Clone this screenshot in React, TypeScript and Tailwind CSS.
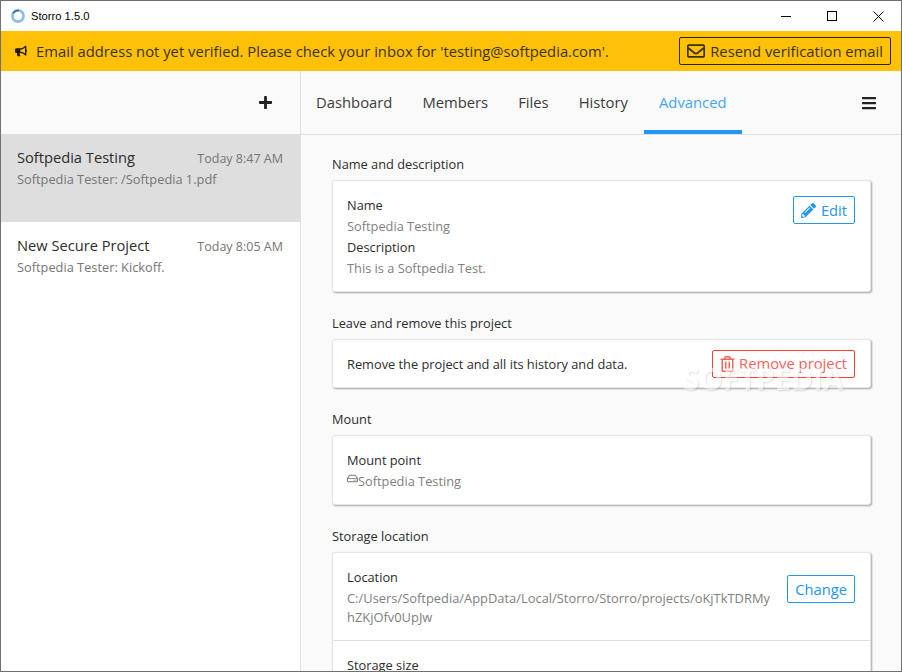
import React from "react";
import { FaBars, FaBullhorn, FaPencilAlt, FaPlus, FaRegEnvelope, FaRegHdd, FaRegTrashAlt } from "react-icons/fa";

const tabs = ["Dashboard", "Members", "Files", "History", "Advanced"];

const projects = [
  { name: "Softpedia Testing", time: "Today 8:47 AM", last: "Softpedia Tester: /Softpedia 1.pdf", active: true },
  { name: "New Secure Project", time: "Today 8:05 AM", last: "Softpedia Tester: Kickoff.", active: false },
];

function Card({ children }: { children: React.ReactNode }) {
  return (
    <div className="mb-[21px] rounded-[3px] border border-[#e6e6e6] bg-white shadow-[1px_1px_2px_rgba(0,0,0,0.35)]">
      {children}
    </div>
  );
}

function SectionTitle({ children }: { children: React.ReactNode }) {
  return <div className="mb-[6px] h-[20px] text-[12.8px] leading-[20px] text-[#2c2c2c]">{children}</div>;
}

function BlueButton({ children }: { children: React.ReactNode }) {
  return (
    <button className="flex h-[28px] items-center gap-[5px] rounded-[2px] border border-[#2196f3] bg-white px-[7px] text-[14.7px] text-[#2196f3]">
      {children}
    </button>
  );
}

export default function App() {
  return (
    <div className="relative flex h-[672px] w-[902px] flex-col overflow-hidden border border-[#707070] bg-white font-['Open_Sans','Noto_Sans',sans-serif]">
      {/* title bar */}
      <div className="flex h-[30px] shrink-0 items-center bg-white pl-[9px]">
        <svg width="16" height="16" viewBox="0 0 16 16">
          <circle cx="8" cy="8" r="5.6" fill="none" stroke="#8dbde2" strokeWidth="2.6" />
          <path d="M3 5.5a5.6 5.6 0 0 1 6-2.9" fill="none" stroke="#3a6f99" strokeWidth="1.4" />
        </svg>
        <span className="ml-[5px] font-['Liberation_Sans',sans-serif] text-[11.2px] text-black">Storro 1.5.0</span>
        <div className="ml-auto flex items-center">
          <div className="flex h-[30px] w-[46px] items-center justify-center">
            <div className="h-px w-[10px] bg-black" />
          </div>
          <div className="flex h-[30px] w-[46px] items-center justify-center">
            <div className="h-[10px] w-[10px] border border-black" />
          </div>
          <div className="flex h-[30px] w-[46px] items-center justify-center">
            <svg width="11" height="11" viewBox="0 0 11 11">
              <path d="M0.5 0.5l10 10M10.5 0.5l-10 10" stroke="#000" strokeWidth="1" />
            </svg>
          </div>
        </div>
      </div>

      {/* verification banner */}
      <div className="flex h-[40px] shrink-0 items-center bg-[#ffc107] pl-[14px] pr-[10px] text-[#3b3208]">
        <FaBullhorn className="h-[12px] w-[12px] text-[#1f1a05]" />
        <span className="ml-[9px] text-[14.8px]">
          Email address not yet verified. Please check your inbox for 'testing@softpedia.com'.
        </span>
        <button className="ml-auto flex h-[28px] items-center gap-[5px] rounded-[2px] border border-[#2a2405] px-[7px] text-[14.8px] text-[#3b3208]">
          <FaRegEnvelope className="h-[18px] w-[18px]" />
          Resend verification email
        </button>
      </div>

      <div className="flex min-h-0 flex-1">
        {/* project list */}
        <div className="flex w-[300px] shrink-0 flex-col border-r border-[#e0e0e0] bg-white">
          <div className="flex h-[63px] shrink-0 items-center justify-end bg-[#fafafa] pr-[27px] text-[#222222]">
            <FaPlus className="h-[15px] w-[15px]" />
          </div>
          {projects.map((p) => (
            <div key={p.name} className={`h-[88px] pl-[16px] pr-[17px] pt-[12px] ${p.active ? "bg-[#dedede]" : "bg-white"}`}>
              <div className="flex items-baseline justify-between">
                <span className="text-[14.67px] leading-[22px] text-[#2c2c2c]">{p.name}</span>
                <span className="text-[12.5px] text-[#757575]">{p.time}</span>
              </div>
              <div className="text-[12.8px] leading-[20px] text-[#757575]">{p.last}</div>
            </div>
          ))}
        </div>

        {/* main panel */}
        <div className="flex min-w-0 flex-1 flex-col bg-[#fafafa]">
          <div className="flex h-[64px] shrink-0 items-stretch border-b border-[#e0e0e0] pr-[24px]">
            {tabs.map((t) => (
              <div
                key={t}
                className={`flex items-center px-[15px] text-[14.8px] ${
                  t === "Advanced" ? "ml-[1px] border-b-[4px] border-[#2196f3] pt-[4px] text-[#42a5f5]" : "text-[#3a3a3a]"
                }`}
              >
                {t}
              </div>
            ))}
            <div className="ml-auto flex items-center text-[#222222]">
              <FaBars className="h-[16px] w-[16px]" />
            </div>
          </div>

          <div className="min-h-0 flex-1 overflow-hidden pl-[31px] pr-[30px] pt-[19px]">
            <SectionTitle>Name and description</SectionTitle>
            <Card>
              <div className="relative h-[110px] pl-[14px] pr-[15px] pt-[14px] text-[12.8px]">
                <div className="leading-[21px] text-[#2c2c2c]">Name</div>
                <div className="leading-[21px] text-[#808080]">Softpedia Testing</div>
                <div className="leading-[21px] text-[#2c2c2c]">Description</div>
                <div className="leading-[21px] text-[#808080]">This is a Softpedia Test.</div>
                <div className="absolute right-[15px] top-[15px]">
                  <BlueButton>
                    <FaPencilAlt className="h-[15px] w-[15px]" />
                    Edit
                  </BlueButton>
                </div>
              </div>
            </Card>

            <SectionTitle>Leave and remove this project</SectionTitle>
            <Card>
              <div className="flex h-[47px] items-center justify-between pl-[14px] pr-[15px] text-[12.8px] text-[#2c2c2c]">
                <span className="mt-[2px]">Remove the project and all its history and data.</span>
                <button className="flex h-[28px] items-center gap-[4px] rounded-[2px] border border-[#f44336] bg-white px-[7px] text-[14.8px] text-[#f4645a]">
                  <FaRegTrashAlt className="h-[16px] w-[15px]" />
                  Remove project
                </button>
              </div>
            </Card>

            <SectionTitle>Mount</SectionTitle>
            <Card>
              <div className="h-[68px] pl-[14px] pr-[15px] pt-[14px] text-[12.8px]">
                <div className="leading-[21px] text-[#2c2c2c]">Mount point</div>
                <div className="flex leading-[21px] text-[#808080]">
                  <FaRegHdd className="mt-[2px] h-[11px] w-[11px] text-[#777777]" />
                  Softpedia Testing
                </div>
              </div>
            </Card>

            <SectionTitle>Storage location</SectionTitle>
            <Card>
              <div className="relative h-[88px] border-b border-[#e0e0e0] pl-[14px] pr-[15px] pt-[13px] text-[12.8px]">
                <div className="leading-[23px] text-[#2c2c2c]">Location</div>
                <div className="w-[428px] break-all text-[12.9px] leading-[19px] text-[#808080]">
                  C:/Users/Softpedia/AppData/Local/Storro/Storro/projects/oKjTkTDRMyhZKjOfv0UpJw
                </div>
                <div className="absolute right-[15px] top-[22px]">
                  <BlueButton>Change</BlueButton>
                </div>
              </div>
              <div className="h-[60px] pl-[14px] pt-[14px] text-[12.8px] leading-[21px] text-[#2c2c2c]">Storage size</div>
            </Card>
          </div>
        </div>
      </div>

      {/* watermark */}
      <div className="pointer-events-none absolute left-[682px] top-[356px] text-[29.5px] font-bold leading-[44px] text-white opacity-50 blur-[0.5px] [text-shadow:1px_1px_2px_rgba(0,0,0,0.25)]">
        SOFTPEDIA
      </div>
    </div>
  );
}
